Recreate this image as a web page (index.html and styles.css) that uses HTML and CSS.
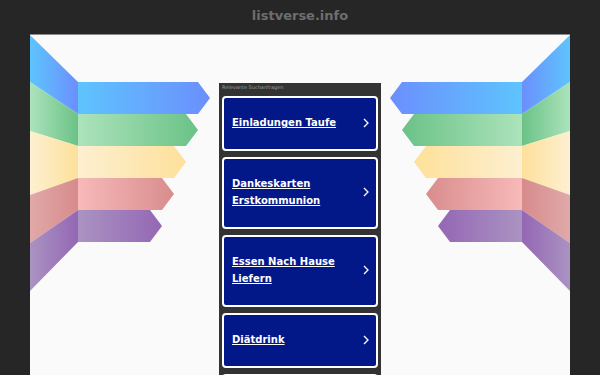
FILE: index.html
```html
<!DOCTYPE html>
<html>
<head>
  <title>listverse.info</title>
  <link rel="stylesheet" href="styles.css">
</head>
<body>
  <div class="domain">listverse.info</div>

  <div class="panel">
    <svg class="deco" width="180" height="260" viewBox="0 0 180 260">
      <defs>
        <linearGradient id="gBlue"><stop offset="0" stop-color="#5ec4fd"/><stop offset="1" stop-color="#6b8ffd"/></linearGradient>
        <linearGradient id="gGreen"><stop offset="0" stop-color="#ace3bb"/><stop offset="1" stop-color="#6bc287"/></linearGradient>
        <linearGradient id="gYellow"><stop offset="0" stop-color="#fdf0d1"/><stop offset="1" stop-color="#fde09a"/></linearGradient>
        <linearGradient id="gPink"><stop offset="0" stop-color="#f7b9b9"/><stop offset="1" stop-color="#d98d8d"/></linearGradient>
        <linearGradient id="gPinkSide"><stop offset="0" stop-color="#e0a9a9"/><stop offset="1" stop-color="#d78b8b"/></linearGradient>
        <linearGradient id="gPurple"><stop offset="0" stop-color="#aa93c2"/><stop offset="1" stop-color="#9467b4"/></linearGradient>
      </defs>
      <!-- side faces -->
      <polygon points="0,0 48,47 48,79 0,47" fill="url(#gBlue)"/>
      <polygon points="0,47 48,79 48,111 0,96" fill="url(#gGreen)"/>
      <polygon points="0,96 48,111 48,143 0,160" fill="url(#gYellow)"/>
      <polygon points="0,160 48,143 48,175 0,208" fill="url(#gPinkSide)"/>
      <polygon points="0,208 48,175 48,207 0,256" fill="url(#gPurple)"/>
      <!-- arrows -->
      <polygon points="48,47 168,47 180,63 168,79 48,79" fill="url(#gBlue)"/>
      <polygon points="48,79 156,79 168,95 156,111 48,111" fill="url(#gGreen)"/>
      <polygon points="48,111 144,111 156,127 144,143 48,143" fill="url(#gYellow)"/>
      <polygon points="48,143 132,143 144,159 132,175 48,175" fill="url(#gPink)"/>
      <polygon points="48,175 120,175 132,191 120,207 48,207" fill="url(#gPurple)"/>
    </svg>

    <div class="results">
      <div class="results-title">Relevante Suchanfragen</div>
      <a class="result" href="#"><span>Einladungen Taufe</span><svg class="chev" width="6" height="10" viewBox="0 0 6 10"><polyline points="1,1 5,5 1,9"/></svg></a>
      <a class="result" href="#"><span>Dankeskarten<br>Erstkommunion</span><svg class="chev" width="6" height="10" viewBox="0 0 6 10"><polyline points="1,1 5,5 1,9"/></svg></a>
      <a class="result" href="#"><span>Essen Nach Hause<br>Liefern</span><svg class="chev" width="6" height="10" viewBox="0 0 6 10"><polyline points="1,1 5,5 1,9"/></svg></a>
      <a class="result" href="#"><span>Diätdrink</span><svg class="chev" width="6" height="10" viewBox="0 0 6 10"><polyline points="1,1 5,5 1,9"/></svg></a>
      <a class="result result-empty" href="#"></a>
    </div>

    <svg class="deco deco-right" width="180" height="260" viewBox="0 0 180 260">
      <polygon points="0,0 48,47 48,79 0,47" fill="url(#gBlue)"/>
      <polygon points="0,47 48,79 48,111 0,96" fill="url(#gGreen)"/>
      <polygon points="0,96 48,111 48,143 0,160" fill="url(#gYellow)"/>
      <polygon points="0,160 48,143 48,175 0,208" fill="url(#gPinkSide)"/>
      <polygon points="0,208 48,175 48,207 0,256" fill="url(#gPurple)"/>
      <polygon points="48,47 168,47 180,63 168,79 48,79" fill="url(#gBlue)"/>
      <polygon points="48,79 156,79 168,95 156,111 48,111" fill="url(#gGreen)"/>
      <polygon points="48,111 144,111 156,127 144,143 48,143" fill="url(#gYellow)"/>
      <polygon points="48,143 132,143 144,159 132,175 48,175" fill="url(#gPink)"/>
      <polygon points="48,175 120,175 132,191 120,207 48,207" fill="url(#gPurple)"/>
    </svg>
  </div>
</body>
</html>
```

FILE: styles.css
```css
body {
  background: #262626;
  margin: 0;
  padding: 0;
  font-family: 'DejaVu Sans', Verdana, sans-serif;
  overflow: hidden;
}

.domain {
  height: 34px;
  line-height: 32px;
  text-align: center;
  color: #6e6e6e;
  font-size: 13px;
  font-weight: bold;
}

.panel {
  margin: 0 30px;
  background: #fafafa;
  border-top: 1px solid #8c8c8c;
  min-height: 400px;
  display: flex;
  align-items: flex-start;
  gap: 9px;
}

.deco {
  display: block;
  flex: none;
}

.deco-right {
  transform: scaleX(-1);
}

.results {
  flex: none;
  width: 156px;
  margin-top: 48px;
  padding: 0 3px 3px;
  background: #333333;
}

.results-title {
  font-size: 5px;
  line-height: 8px;
  padding: 0 0 5px;
  color: #9a9a9a;
  white-space: nowrap;
}

.result {
  display: flex;
  align-items: center;
  justify-content: space-between;
  margin-bottom: 6px;
  padding: 16px 7px 18px 8px;
  background: #021788;
  border: 2px solid #ffffff;
  border-radius: 4px;
  color: #ffffff;
  font-size: 10px;
  font-weight: bold;
  line-height: 17px;
  text-decoration: underline;
}

.result-empty {
  height: 17px;
}

.chev {
  flex: none;
}

.chev polyline {
  fill: none;
  stroke: #ffffff;
  stroke-width: 1.3;
}
```
